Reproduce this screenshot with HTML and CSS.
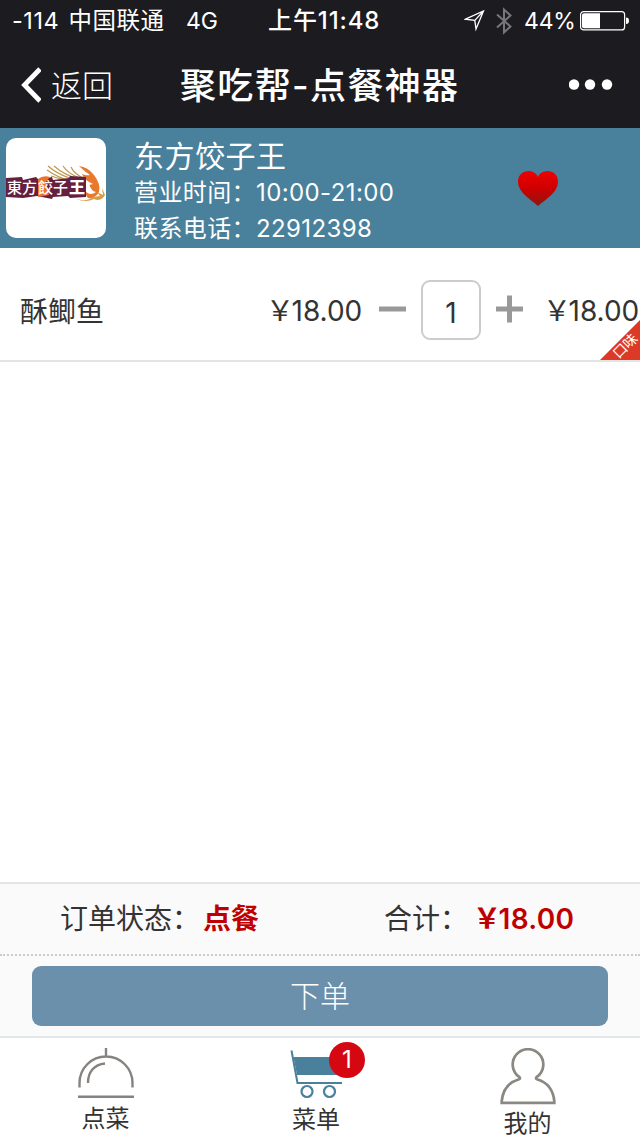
FILE: index.html
```
<!DOCTYPE html>
<html lang="zh-CN">
<head>
<meta charset="utf-8">
<title>聚吃帮-点餐神器</title>
<link rel="stylesheet" href="styles.css">
</head>
<body>
<div class="app">
  <header class="top">
    <div class="status">
      <span class="carrier">-114 中国联通</span>
      <span class="network">4G</span>
      <span class="clock">上午11:48</span>
      <svg class="location" width="22" height="22" viewBox="0 0 22 22"><path d="M1.500 9.200 19.500 1 12 19 10.800 10.400Z M10.800 10.400 19.500 1" fill="none" stroke="#fff" stroke-width="1.300"/></svg>
      <svg class="bluetooth" width="16" height="28" viewBox="0 0 16 28"><path d="M1 7.500 14.500 19.500 8 25.500V2.500L14.500 8.500 1 20.500" fill="none" stroke="#77777b" stroke-width="2"/></svg>
      <span class="percent">44%</span>
      <svg class="battery" width="50" height="20" viewBox="0 0 50 20"><rect x=".6" y=".6" width="44" height="18.300" rx="3" fill="none" stroke="#fff" stroke-width="1.200"/><path d="M4 2.300h16v15H4a2 2 0 0 1-2-2v-11a2 2 0 0 1 2-2Z" fill="#fff"/><path d="M46 6.500q3 0 3 3.300t-3 3.300Z" fill="#fff"/></svg>
    </div>
    <nav class="nav">
      <svg class="back-icon" width="23" height="36" viewBox="0 0 23 36"><path d="M22 2 6.500 18 22 34" fill="none" stroke="#fff" stroke-width="4.800"/></svg>
      <span class="back">返回</span>
      <h1 class="title">聚吃帮-点餐神器</h1>
      <svg class="more" width="44" height="12" viewBox="0 0 44 12" fill="#fff"><circle cx="5" cy="5.500" r="5.200"/><circle cx="21" cy="5.500" r="5.200"/><circle cx="38" cy="5.500" r="5.200"/></svg>
    </nav>
  </header>

  <section class="shop">
    <svg class="logo" width="100" height="100" viewBox="0 0 100 100">
      <rect width="100" height="100" rx="10" fill="#fff"/>
      <g fill="none" stroke="#bd9851" stroke-width="1.200"><path d="M42 28q10 9 30 15M41 32q11 8 27 12M48 28q10 9 27 14M57 28q5 8 19 13M65 29q3 7 14 12M45 38q9 3 22 6"/></g>
      <path d="M73 28q9 1 15 9 7 9 5 17-4 7-11 6-5-5-1-11 3-3 6-3-9-4-11-10 4 2 8 1-6-4-11-9Z" fill="#e8792c"/>
      <path d="M83 46q-5 2-3 8 5 4 10 0-5-1-7-8Z" fill="#fff"/>
      <path d="M70 61q11 3 17-2l7-1-3-4 6 3-1-7 3 7q-4 7-11 4-8 4-18 0Z" fill="#d89c45"/>
      <path d="M0 40 16 39 17 42 30 39 33 42 46 39 47 42 63 40 64 38 80 39 80 59 64 60 62 58 47 59 46 61 31 58 17 60 0 59Z" fill="#64203e"/>
      <path d="M32 41q5-4 12-2l-4 5 3 13-11 2Z" fill="#ed7128"/>
      <g class="logo-text"><text x="1" y="55">東</text><text x="16" y="55">方</text><text x="32" y="55">餃</text><text x="47" y="55">子</text><text class="logo-king" x="63" y="55">王</text></g>
    </svg>
    <div class="shop-info">
      <div class="shop-name">东方饺子王</div>
      <div class="shop-line">营业时间：10:00-21:00</div>
      <div class="shop-line">联系电话：22912398</div>
    </div>
    <svg class="heart" width="42" height="38" viewBox="0 0 42 38"><defs><linearGradient id="heart-fill" x2="0" y2="1"><stop stop-color="#f00000"/><stop offset=".5" stop-color="#ce0000"/><stop offset="1" stop-color="#8e1510"/></linearGradient></defs><path d="M21 8C17-1 1 0 1 13c0 10 12 17 20 24C29 30 41 23 41 13 41 0 25-1 21 8Z" fill="url(#heart-fill)"/></svg>
  </section>

  <main class="order">
    <article class="dish">
      <span class="dish-name">酥鲫鱼</span>
      <span class="price"><span class="yen">￥</span>18.00</span>
      <svg class="minus" width="28" height="28" viewBox="0 0 28 28"><path d="M0 14h27" stroke="#999" stroke-width="5"/></svg>
      <span class="quantity">1</span>
      <svg class="plus" width="28" height="28" viewBox="0 0 28 28"><path d="M0 14h27M13.500 .5v27" stroke="#999" stroke-width="5"/></svg>
      <span class="subtotal"><span class="yen">￥</span>18.00</span>
      <svg class="flavor" width="40" height="40" viewBox="0 0 40 40"><path d="M40 0v40H0Z" fill="#dc3a27"/><text transform="translate(18.800 39.300) rotate(-45)">口味</text></svg>
    </article>
  </main>

  <footer>
    <div class="summary">
      <span class="state-label">订单状态：</span><b class="state">点餐</b>
      <span class="total-label">合计：</span><b class="total"><span class="yen">￥</span>18.00</b>
    </div>
    <div class="action"><div class="submit">下单</div></div>
    <div class="tabs">
      <div class="tab tab-dish">
        <svg width="58" height="54" viewBox="0 0 58 54" fill="none" stroke="#85827f" stroke-width="2.400"><path d="M2.500 39.500V35a26.500 26.500 0 0 1 53 0v4.500M29 0v8M11 35c0-11 6-18.500 17-19.500M1 48.700h56"/></svg>
        <span>点菜</span>
      </div>
      <div class="tab tab-menu">
        <svg width="56" height="55" viewBox="0 0 56 55"><path d="M5.500 9h46v18H9Z" fill="#49809b"/><path d="M3.500 2.500 9.500 35H54" fill="none" stroke="#49809b" stroke-width="2"/><g fill="#fff" stroke="#49809b" stroke-width="2.200"><circle cx="19" cy="43.500" r="5.500"/><circle cx="41.500" cy="43.500" r="5.500"/></g></svg>
        <span>菜单</span>
        <div class="badge">1</div>
      </div>
      <div class="tab tab-mine">
        <svg width="56" height="59" viewBox="0 0 56 59"><path d="M1.700 54.800V53C3 41 10 34 18.500 31.500 20.500 31 20 30 19.500 29.200A15.300 15.300 0 1 1 36.500 29.200C36 30 35.500 31 37.500 31.500 46 34 53 41 54.300 53v1.800Z" fill="none" stroke="#8b8883" stroke-width="2.700"/></svg>
        <span>我的</span>
      </div>
    </div>
  </footer>
</div>
</body>
</html>
```
FILE: styles.css
```
* { box-sizing: border-box; }
body {
  margin: 0;
  font-family: Inter, "Noto Sans CJK SC", sans-serif;
  font-weight: 400;
  color: #333;
}
svg { display: block; flex: none; }
span, b { white-space: nowrap; }

.app { display: flex; flex-direction: column; width: 640px; height: 1136px; background: #fff; }

.top { height: 128px; background: #1c1b20; color: #fff; }
.status { display: flex; align-items: center; height: 41px; font-size: 24px; line-height: 28px; }
.carrier { width: 174px; padding-left: 12px; font-size: 23.5px; word-spacing: 2px; letter-spacing: .55px; }
.network { width: 94px; padding-left: 12px; font-size: 23px; }
.clock { width: 196px; font-weight: 500; letter-spacing: .9px; }
.location { margin-right: 10px; }
.bluetooth { margin-right: 12px; }
.percent { width: 56px; font-size: 23px; letter-spacing: -.2px; }
.nav { display: flex; align-items: center; height: 87px; }
.back-icon { margin-left: 18px; }
.back { width: 139px; padding: 0 0 2px 10px; font-size: 31px; font-weight: 300; }
.title { width: 389px; margin: 0; padding-bottom: 4px; font-size: 36px; font-weight: 500; letter-spacing: 1.35px; white-space: nowrap; }

.shop { display: flex; height: 120px; padding: 10px 6px; background: #49809b; color: #fff; }
.logo-text { font-family: "Noto Sans CJK TC", sans-serif; font-size: 15px; font-weight: 500; fill: #fff; }
.logo-king { font-size: 16px; font-weight: 900; }
.shop-info { width: 412px; padding-left: 28px; }
.shop-name { font-size: 30px; font-weight: 400; line-height: 37px; letter-spacing: .5px; }
.shop-line { font-size: 24px; font-weight: 400; line-height: 36px; letter-spacing: .4px; }
.heart { margin-top: 31px; margin-left: -1px; }

.order { flex: 1; }
.dish { position: relative; display: flex; align-items: center; height: 114px; padding: 12px 0 0 20px; border-bottom: 2px solid #e4e4e4; font-size: 28px; }
.dish-name { width: 246px; padding-bottom: 1px; }
.price { width: 113px; padding-bottom: 2px; }
.yen { display: inline-block; width: 25.500px; }
.minus, .plus { margin-top: -2px; }
.quantity { display: flex; align-items: center; justify-content: center; width: 60px; height: 60px; margin: 0 15px 0 14px; padding-top: 5px; border: 2px solid #ccc; border-radius: 9px; }
.subtotal { margin-left: 19px; padding-bottom: 2px; }
.flavor { position: absolute; right: 0; bottom: 0; }
.flavor text { font-size: 14px; font-weight: 400; fill: #fff; }

footer { background: #fafafa; }
.summary { display: flex; align-items: center; height: 74px; padding-bottom: 4px; border-top: 2px solid #e3e5e7; border-bottom: 2px dotted #ccc; font-size: 28px; }
.state-label { width: 203px; padding-left: 60px; }
.state { width: 181px; color: #c00000; }
.total-label { width: 89px; }
.total { color: #c00000; font-weight: 600; letter-spacing: .3px; }
.action { height: 80px; padding: 10px 32px; }
.submit { display: flex; align-items: center; justify-content: center; height: 60px; padding-bottom: 4px; border-radius: 9px; background: #6b90ab; color: #fff; font-size: 30px; font-weight: 300; }
.tabs { display: flex; height: 100px; padding-top: 10px; border-top: 2px solid #e2e7ea; background: #fff; }
.tab { position: relative; display: flex; flex-direction: column; align-items: center; font-size: 24px; line-height: 34px; }
.tab-dish { width: 211px; }
.tab-menu { width: 210px; }
.tab-mine { width: 213px; }
.badge { position: absolute; left: 118px; top: -6px; width: 36px; height: 36px; border-radius: 50%; background: #d50812; color: #fff; text-align: center; line-height: 36px; }
```
